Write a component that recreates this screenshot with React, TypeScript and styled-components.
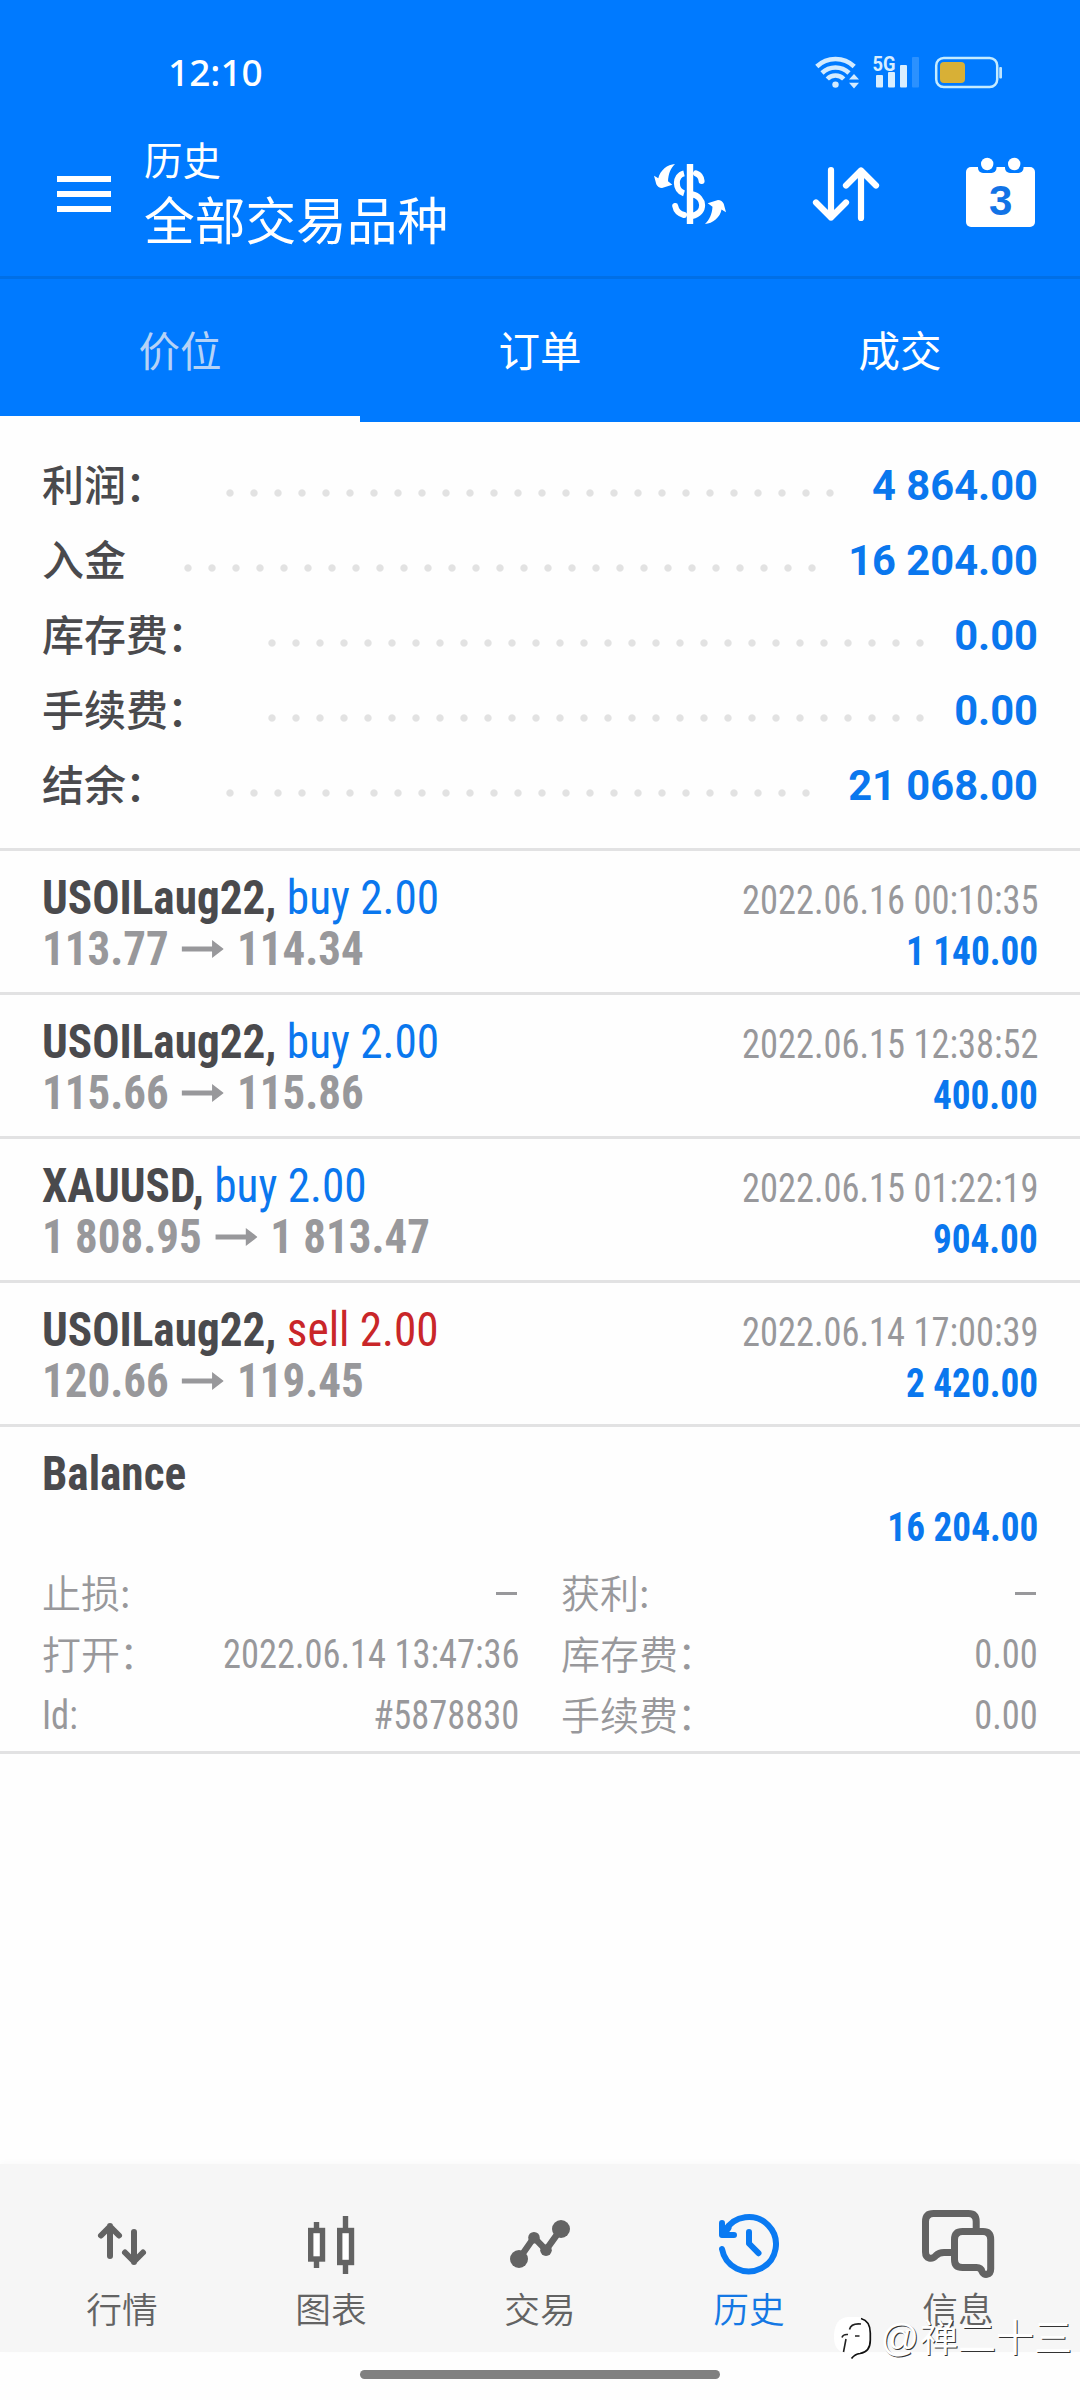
import React from "react";
import styled, { createGlobalStyle } from "styled-components";

const BLUE = "#007aff";
const LINK = "#0a77ee";
const GREY = "#98989b";
const NAV_GREY = "#636363";
const CJK = '"Noto Sans CJK SC", sans-serif';
const LATIN = 'Roboto, "Noto Sans CJK SC", sans-serif';

const GlobalStyle = createGlobalStyle`
  * { box-sizing: border-box; }
  body { margin: 0; background: #fefefe; }
`;

const Screen = styled.div`
  position: relative;
  display: flex;
  flex-direction: column;
  width: 1080px;
  height: 2400px;
  overflow: hidden;
  background: #fefefe;
  font-family: ${LATIN};
`;

/* ---------- header ---------- */

const Header = styled.header`
  background: ${BLUE};
  color: #fff;
`;

const StatusBar = styled.div`
  display: flex;
  align-items: center;
  height: 124px;
  padding: 20px 76px 0 168px;
`;

const Clock = styled.span`
  flex: 1;
  font: 500 37px/50px "Noto Sans", sans-serif;
`;

const Toolbar = styled.div`
  display: flex;
  align-items: center;
  height: 155px;
  padding: 0 44px 12px 57px;
  border-bottom: 3px solid #006fe6;
`;

const Burger = styled.div`
  display: flex;
  flex-direction: column;
  gap: 9px;
  width: 54px;
  margin-right: 33px;
`;

const BurgerLine = styled.span`
  height: 6px;
  background: #fff;
`;

const Titles = styled.div`
  flex: 1;
  padding-bottom: 4px;
  font-family: ${CJK};
  font-weight: 400;
`;

const Caption = styled.div`
  font-size: 38.5px;
  line-height: 53px;
`;

const Title = styled.div`
  font-size: 50.7px;
  line-height: 67px;
`;

const Actions = styled.div`
  display: flex;
  align-items: center;
`;

const Tabs = styled.div`
  display: grid;
  grid-template-columns: repeat(3, 1fr);
`;

const Tab = styled.div<{ $active?: boolean }>`
  height: 143px;
  padding-top: 3px;
  border-bottom: 6px solid ${(p) => (p.$active ? "#fefefe" : BLUE)};
  color: ${(p) => (p.$active ? "#b5d2f7" : "#fff")};
  font: 400 41.5px/135px ${CJK};
  text-align: center;
`;

/* ---------- summary ---------- */

const Summary = styled.section`
  padding: 26px 42px 25px 42px;
`;

const SummaryRow = styled.div`
  display: flex;
  align-items: center;
  height: 75px;
`;

const SummaryLabel = styled.span`
  padding-bottom: 5px;
  color: #4a4a4d;
  font: 500 42px/60px ${CJK};
`;

const Colon = styled.span`
  margin: 0 1px 0 -1px;
`;

const Leader = styled.span`
  flex: 1;
  height: 8px;
  margin: 14px 24px 0 42px;
  background: radial-gradient(circle at 20px 4px, #e2e2e2 3.2px, transparent 4.1px) 0 0 / 24px 8px repeat-x;
`;

const SummaryValue = styled.span`
  color: ${LINK};
  font-size: 41.7px;
  font-weight: 700;
  line-height: 75px;
`;

/* ---------- deals ---------- */

const DealItem = styled.article`
  padding: 21px 42px 0 42px;
  height: 144px;
  border-top: 3px solid #e2e2e3;
  font-family: "Roboto Condensed", ${LATIN};
  font-stretch: 75%;
`;

const BalanceItem = styled(DealItem)`
  height: 330px;
  border-bottom: 3px solid #e2e2e3;
`;

const DealLine = styled.div<{ $amountOnly?: boolean }>`
  display: flex;
  align-items: baseline;
  justify-content: space-between;
  height: 51px;
  padding-top: ${(p) => (p.$amountOnly ? 7 : 0)}px;
  line-height: 51px;
`;

const Symbol = styled.span`
  color: #4a4a4d;
  font-size: 48px;
  font-weight: 700;
  transform: scaleX(0.942);
  transform-origin: left;
`;

const Side = styled.span<{ $sell?: boolean }>`
  color: ${(p) => (p.$sell ? "#c92629" : LINK)};
  font-weight: 400;
`;

const Prices = styled.span`
  color: ${GREY};
  font-size: 48px;
  font-weight: 700;
  transform: scaleX(0.937);
  transform-origin: left;
`;

const ArrowGlyph = styled.svg`
  width: 45px;
  height: 18px;
  margin: 0 14px 7px 14px;
  fill: ${GREY};
`;

const Time = styled.span`
  color: ${GREY};
  font-size: 40px;
  line-height: 44px;
  transform: scaleX(0.911);
  transform-origin: right;
`;

const Profit = styled.span`
  margin-left: auto;
  color: ${LINK};
  font-size: 40px;
  font-weight: 700;
  line-height: 44px;
  transform: scaleX(0.93);
  transform-origin: right;
`;

const Details = styled.div`
  display: grid;
  grid-template-columns: 1fr 1fr;
  column-gap: 42px;
  margin-top: 13px;
`;

const Detail = styled.div`
  display: flex;
  align-items: center;
  justify-content: space-between;
  height: 61px;
  color: ${GREY};
  font-size: 40px;
  line-height: 61px;
`;

const DetailLabel = styled.span<{ $latin?: boolean }>`
  ${(p) =>
    p.$latin
      ? "transform: scaleX(0.911); transform-origin: left;"
      : `padding-bottom: 4px; font: 350 39px/57px ${CJK};`}
`;

const DetailValue = styled.span`
  transform: scaleX(0.911);
  transform-origin: right;
`;

const Dash = styled.span`
  width: 21px;
  height: 3px;
  margin-right: 2px;
  background: ${GREY};
`;

/* ---------- bottom ---------- */

const Spacer = styled.div`
  flex: 1;
`;

const Nav = styled.nav`
  display: grid;
  grid-template-columns: repeat(5, 209px);
  justify-content: center;
  height: 188px;
  background: #f6f6f6;
  box-shadow: 0 -2px 6px rgba(0, 0, 0, 0.02);
`;

const NavItem = styled.div<{ $active?: boolean }>`
  display: flex;
  flex-direction: column;
  align-items: center;
  gap: 2px;
  padding-top: 40px;
  color: ${(p) => (p.$active ? "#1478e4" : NAV_GREY)};
  font: 350 35.7px/44px ${CJK};
`;

const HomeArea = styled.div`
  display: flex;
  justify-content: center;
  height: 48px;
  padding-top: 18px;
`;

const HomeBar = styled.div`
  width: 360px;
  height: 9px;
  border-radius: 5px;
  background: #808080;
`;

const Watermark = styled.div`
  position: absolute;
  right: 8px;
  bottom: 34px;
  display: flex;
  align-items: center;
  gap: 6px;
  color: #fff;
  font: 400 38px/56px ${CJK};
  text-shadow: 1px 1px 0 #333;
`;

const At = styled.span`
  margin-right: 1px;
  font: 400 38px/56px "Liberation Sans", sans-serif;
`;

/* ---------- icons ---------- */

const WifiIcon = () => (
  <svg width="50" height="40" viewBox="813 52 50 40" fill="none" stroke="#d3ebff" strokeWidth="4.6">
    <path d="M816.8 66.5A27 27 0 0 1 854.2 66.5" />
    <path d="M822 73A19.5 19.5 0 0 1 849 73" />
    <path d="M827.3 79A11.5 11.5 0 0 1 843.7 79" />
    <circle cx="835.5" cy="84.6" r="3.2" fill="#d3ebff" stroke="none" />
    <path d="M854 74l5 5.6h-10zM854 88.4l5-5.6h-10z" fill="#d3ebff" stroke="none" />
  </svg>
);

const SignalIcon = () => (
  <svg width="52" height="40" viewBox="870 52 52 40" fill="#d8eeff">
    <text x="872.5" y="70.5" fontFamily="Roboto, sans-serif" fontSize="21" fontWeight="700" textLength="23" lengthAdjust="spacingAndGlyphs">5G</text>
    <rect x="876" y="75" width="7" height="12.5" rx="1" />
    <rect x="888" y="72" width="7" height="15.5" rx="1" />
    <rect x="900" y="65" width="7" height="22.5" rx="1" />
    <rect x="912" y="57" width="7" height="30.5" rx="1" opacity="0.2" />
  </svg>
);

const BatteryIcon = () => (
  <svg width="70" height="40" viewBox="934 52 70 40" fill="none">
    <rect x="936.2" y="58" width="61" height="29" rx="7.5" stroke="#c4ebff" strokeWidth="2.5" />
    <rect x="940" y="62" width="25" height="21" rx="4" fill="#d8b036" />
    <rect x="999.2" y="67" width="2.8" height="11.5" rx="1" fill="#bfe5ff" />
  </svg>
);

const StatusIcons = styled.div`
  display: flex;
  & > svg:nth-child(1) { margin-right: 7px; }
  & > svg:nth-child(2) { margin-right: 12px; }
`;

const CurrencyIcon = styled(({ className }: { className?: string }) => (
  <svg className={className} width="76" height="76" viewBox="652 156 76 76" fill="none">
    <path d="M690 164V224" stroke="#fff" strokeWidth="6.4" strokeLinecap="butt" />
    <path d="M684 173.3C674.5 175.5 674.5 190.5 684 193.3" stroke="#fff" strokeWidth="6" />
    <path d="M696 173.3Q701 175 701.6 181" stroke="#fff" strokeWidth="6" strokeLinecap="round" />
    <path d="M675.2 206Q676.5 213 684 215" stroke="#fff" strokeWidth="6" strokeLinecap="round" />
    <path d="M692 194.3C705 197 706 213 692 216" stroke="#fff" strokeWidth="6" />
    <path d="M675 164C667.5 164.3 660 170.5 658.3 178.3L654 175.8L656.3 184.3Q658 188 662 188L672.3 184.8L668 181.3C668.3 174 670.5 168.5 675 164Z" fill="#fff" />
    <path d="M705 224C712.5 223.7 720.5 217 721.5 209.5L726 212.3L723.7 203.8Q722 200 718 200L707.7 203.2L712.5 206.7C712 214 709.5 219.5 705 224Z" fill="#fff" />
  </svg>
))`
  margin-right: 84px;
`;

const SortIcon = styled(({ className }: { className?: string }) => (
  <svg className={className} width="68" height="60" viewBox="812 164 68 60" fill="none" stroke="#fff" strokeWidth="6.2" strokeLinecap="round" strokeLinejoin="round">
    <path d="M831 170V217.5M816 202.5L831 217.5L846 202.5" />
    <path d="M861 218V170.5M846 185.5L861 170.5L876 185.5" />
  </svg>
))`
  margin-right: 86px;
`;

const CalendarIcon = () => (
  <svg width="70" height="74" viewBox="966 157 70 74">
    <rect x="966" y="167" width="69" height="60" rx="5" fill="#fff" />
    <rect x="978" y="155" width="18.5" height="18" rx="5" fill={BLUE} />
    <rect x="1005" y="155" width="18.5" height="18" rx="5" fill={BLUE} />
    <circle cx="987.2" cy="164" r="6.2" fill="#fff" />
    <circle cx="1014.2" cy="164" r="6.2" fill="#fff" />
    <text x="1000.7" y="214.5" textAnchor="middle" fontFamily="Liberation Sans, sans-serif" fontSize="42" fontWeight="700" fill="#1273e6">3</text>
  </svg>
);

const QuotesIcon = () => (
  <svg width="80" height="80" viewBox="82 2204 80 80" fill="none" stroke={NAV_GREY} strokeWidth="6" strokeLinecap="round" strokeLinejoin="round">
    <path d="M110 2256V2226M101 2235.5L110 2226.5L119 2235.5" />
    <path d="M134 2232V2262M125 2252.5L134 2261.5L143 2252.5" />
  </svg>
);

const ChartIcon = () => (
  <svg width="80" height="80" viewBox="291 2204 80 80" fill="none" stroke={NAV_GREY} strokeWidth="5.4">
    <path d="M316.5 2222V2230M316.5 2260V2268M345.5 2216V2230M345.5 2263V2274" />
    <rect x="310.7" y="2230.5" width="11.8" height="28.5" fill="#fff" />
    <rect x="339.7" y="2230.5" width="11.8" height="32" fill="#fff" />
  </svg>
);

const TradeIcon = () => (
  <svg width="80" height="80" viewBox="500 2204 80 80" fill={NAV_GREY}>
    <path d="M519 2259L534 2237.5L546 2250L561 2229" fill="none" stroke={NAV_GREY} strokeWidth="6.5" />
    <circle cx="519" cy="2259" r="9" />
    <circle cx="534" cy="2237.7" r="5.8" />
    <circle cx="546" cy="2250.2" r="5.8" />
    <circle cx="561" cy="2229" r="9" />
  </svg>
);

const HistoryIcon = () => (
  <svg width="80" height="80" viewBox="709 2204 80 80" fill="none" stroke="#0a7af2" strokeWidth="6" strokeLinecap="round" strokeLinejoin="round">
    <path d="M722 2249A27.2 27.2 0 1 0 725 2231" />
    <path d="M722 2223V2235H734" />
    <path d="M723 2234L728 2228" strokeWidth="7" />
    <path d="M749 2232V2243.5L758.5 2253.2" />
  </svg>
);

const ChatIcon = () => (
  <svg width="80" height="80" viewBox="918 2204 80 80" fill="none" stroke={NAV_GREY} strokeWidth="7" strokeLinejoin="round">
    <path d="M976.2 2230V2221.5Q976.2 2213.5 968.5 2213.5H933.5Q925.5 2213.5 925.5 2221.5V2252C925.5 2259 932 2260 936 2255.5Q939 2252.5 944 2252.5H954" />
    <path d="M962.5 2231.5H983Q990.7 2231.5 990.7 2239.5V2269C990.7 2275.5 983.5 2276 982 2271.5Q981 2267.5 976.5 2267.5H962.5Q954.5 2267.5 954.5 2259.5V2239.5Q954.5 2231.5 962.5 2231.5Z" />
  </svg>
);

const WatermarkLogo = () => (
  <svg width="42" height="50" viewBox="838 2316 42 50" fill="none">
    <path d="M854 2321H863Q876.5 2321 876.5 2335V2344Q876.5 2356 864 2357L858 2362L856 2357Q840 2358 840 2341Q840 2322 854 2321Z" fill="#fff" />
    <path d="M867 2322.5Q876.3 2325 876.3 2337V2344Q876.3 2356 866 2357.5Q861 2358 857.5 2362.5" stroke="#111" strokeWidth="1.7" />
    <path d="M867 2328Q857 2327 855.5 2333.5M854 2338.5Q849 2338 848 2341.5M852 2343L849.5 2356M861 2340H865.5" stroke="#222" strokeWidth="1.6" />
  </svg>
);

/* ---------- data ---------- */

const summary = [
  { label: "利润", colon: true, value: "4 864.00" },
  { label: "入金", value: "16 204.00" },
  { label: "库存费", colon: true, value: "0.00" },
  { label: "手续费", colon: true, value: "0.00" },
  { label: "结余", colon: true, value: "21 068.00" },
];

const deals = [
  { symbol: "USOILaug22,", side: "buy", from: "113.77", to: "114.34", time: "2022.06.16 00:10:35", profit: "1 140.00" },
  { symbol: "USOILaug22,", side: "buy", from: "115.66", to: "115.86", time: "2022.06.15 12:38:52", profit: "400.00" },
  { symbol: "XAUUSD,", side: "buy", from: "1 808.95", to: "1 813.47", time: "2022.06.15 01:22:19", profit: "904.00" },
  { symbol: "USOILaug22,", side: "sell", from: "120.66", to: "119.45", time: "2022.06.14 17:00:39", profit: "2 420.00" },
];

const details = [
  { label: "止损:" },
  { label: "获利:" },
  { label: "打开", colon: true, value: "2022.06.14 13:47:36" },
  { label: "库存费", colon: true, value: "0.00" },
  { label: "Id:", value: "#5878830", latin: true },
  { label: "手续费", colon: true, value: "0.00" },
];

const navItems = [
  { label: "行情", Icon: QuotesIcon },
  { label: "图表", Icon: ChartIcon },
  { label: "交易", Icon: TradeIcon },
  { label: "历史", Icon: HistoryIcon, active: true },
  { label: "信息", Icon: ChatIcon },
];

export default function App() {
  return (
    <Screen>
      <GlobalStyle />
      <Header>
        <StatusBar>
          <Clock>12:10</Clock>
          <StatusIcons>
            <WifiIcon />
            <SignalIcon />
            <BatteryIcon />
          </StatusIcons>
        </StatusBar>
        <Toolbar>
          <Burger>
            <BurgerLine />
            <BurgerLine />
            <BurgerLine />
          </Burger>
          <Titles>
            <Caption>历史</Caption>
            <Title>全部交易品种</Title>
          </Titles>
          <Actions>
            <CurrencyIcon />
            <SortIcon />
            <CalendarIcon />
          </Actions>
        </Toolbar>
        <Tabs>
          <Tab $active>价位</Tab>
          <Tab>订单</Tab>
          <Tab>成交</Tab>
        </Tabs>
      </Header>

      <Summary>
        {summary.map((row) => (
          <SummaryRow key={row.label}>
            <SummaryLabel>
              {row.label}
              {row.colon && <Colon>：</Colon>}
            </SummaryLabel>
            <Leader />
            <SummaryValue>{row.value}</SummaryValue>
          </SummaryRow>
        ))}
      </Summary>

      {deals.map((deal) => (
        <DealItem key={deal.time}>
          <DealLine>
            <Symbol>
              {deal.symbol} <Side $sell={deal.side === "sell"}>{deal.side} 2.00</Side>
            </Symbol>
            <Time>{deal.time}</Time>
          </DealLine>
          <DealLine>
            <Prices>
              {deal.from}
              <ArrowGlyph viewBox="0 0 45 18" preserveAspectRatio="none">
                <path d="M0 6.5H32.5V0L45 9L32.5 18V11.5H0Z" />
              </ArrowGlyph>
              {deal.to}
            </Prices>
            <Profit>{deal.profit}</Profit>
          </DealLine>
        </DealItem>
      ))}

      <BalanceItem>
        <DealLine>
          <Symbol>Balance</Symbol>
        </DealLine>
        <DealLine $amountOnly>
          <Profit>16 204.00</Profit>
        </DealLine>
        <Details>
          {details.map((d) => (
            <Detail key={d.label}>
              <DetailLabel $latin={d.latin}>
                {d.label}
                {d.colon && <Colon>：</Colon>}
              </DetailLabel>
              {d.value ? <DetailValue>{d.value}</DetailValue> : <Dash />}
            </Detail>
          ))}
        </Details>
      </BalanceItem>

      <Spacer />

      <Nav>
        {navItems.map(({ label, Icon, active }) => (
          <NavItem key={label} $active={active}>
            <Icon />
            {label}
          </NavItem>
        ))}
      </Nav>
      <HomeArea>
        <HomeBar />
      </HomeArea>

      <Watermark>
        <WatermarkLogo />
        <span>
          <At>@</At>禅二十三
        </span>
      </Watermark>
    </Screen>
  );
}
